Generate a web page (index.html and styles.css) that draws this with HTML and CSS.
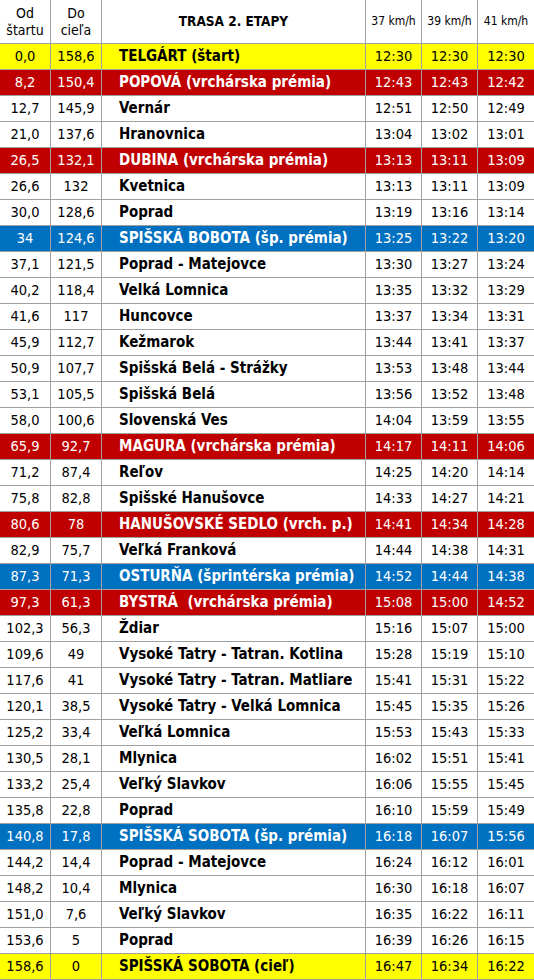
FILE: index.html
```html
<!DOCTYPE html>
<html lang="sk">
<head>
<meta charset="utf-8">
<title>Trasa 2. etapy</title>
<link rel="stylesheet" href="styles.css">
</head>
<body>
<table class="route">
  <thead>
    <tr class="head">
      <th class="c1">Od<br>štartu</th>
      <th class="c2">Do<br>cieľa</th>
      <th class="c3 title">TRASA 2. ETAPY</th>
      <th class="c4 speed">37 km/h</th>
      <th class="c5 speed">39 km/h</th>
      <th class="c6 speed">41 km/h</th>
    </tr>
  </thead>
  <tbody>
    <tr class="yellow"><td>0,0</td><td>158,6</td><td class="place">TELGÁRT (štart)</td><td>12:30</td><td>12:30</td><td>12:30</td></tr>
    <tr class="red"><td>8,2</td><td>150,4</td><td class="place">POPOVÁ (vrchárska prémia)</td><td>12:43</td><td>12:43</td><td>12:42</td></tr>
    <tr><td>12,7</td><td>145,9</td><td class="place">Vernár</td><td>12:51</td><td>12:50</td><td>12:49</td></tr>
    <tr><td>21,0</td><td>137,6</td><td class="place">Hranovnica</td><td>13:04</td><td>13:02</td><td>13:01</td></tr>
    <tr class="red"><td>26,5</td><td>132,1</td><td class="place">DUBINA (vrchárska prémia)</td><td>13:13</td><td>13:11</td><td>13:09</td></tr>
    <tr><td>26,6</td><td>132</td><td class="place">Kvetnica</td><td>13:13</td><td>13:11</td><td>13:09</td></tr>
    <tr><td>30,0</td><td>128,6</td><td class="place">Poprad</td><td>13:19</td><td>13:16</td><td>13:14</td></tr>
    <tr class="blue"><td>34</td><td>124,6</td><td class="place">SPIŠSKÁ BOBOTA (šp. prémia)</td><td>13:25</td><td>13:22</td><td>13:20</td></tr>
    <tr><td>37,1</td><td>121,5</td><td class="place">Poprad - Matejovce</td><td>13:30</td><td>13:27</td><td>13:24</td></tr>
    <tr><td>40,2</td><td>118,4</td><td class="place">Velká Lomnica</td><td>13:35</td><td>13:32</td><td>13:29</td></tr>
    <tr><td>41,6</td><td>117</td><td class="place">Huncovce</td><td>13:37</td><td>13:34</td><td>13:31</td></tr>
    <tr><td>45,9</td><td>112,7</td><td class="place">Kežmarok</td><td>13:44</td><td>13:41</td><td>13:37</td></tr>
    <tr><td>50,9</td><td>107,7</td><td class="place">Spišská Belá - Strážky</td><td>13:53</td><td>13:48</td><td>13:44</td></tr>
    <tr><td>53,1</td><td>105,5</td><td class="place">Spišská Belá</td><td>13:56</td><td>13:52</td><td>13:48</td></tr>
    <tr><td>58,0</td><td>100,6</td><td class="place">Slovenská Ves</td><td>14:04</td><td>13:59</td><td>13:55</td></tr>
    <tr class="red"><td>65,9</td><td>92,7</td><td class="place">MAGURA (vrchárska prémia)</td><td>14:17</td><td>14:11</td><td>14:06</td></tr>
    <tr><td>71,2</td><td>87,4</td><td class="place">Reľov</td><td>14:25</td><td>14:20</td><td>14:14</td></tr>
    <tr><td>75,8</td><td>82,8</td><td class="place">Spišské Hanušovce</td><td>14:33</td><td>14:27</td><td>14:21</td></tr>
    <tr class="red"><td>80,6</td><td>78</td><td class="place">HANUŠOVSKÉ SEDLO (vrch. p.)</td><td>14:41</td><td>14:34</td><td>14:28</td></tr>
    <tr><td>82,9</td><td>75,7</td><td class="place">Veľká Franková</td><td>14:44</td><td>14:38</td><td>14:31</td></tr>
    <tr class="blue"><td>87,3</td><td>71,3</td><td class="place">OSTURŇA (šprintérska prémia)</td><td>14:52</td><td>14:44</td><td>14:38</td></tr>
    <tr class="red"><td>97,3</td><td>61,3</td><td class="place">BYSTRÁ&nbsp; (vrchárska prémia)</td><td>15:08</td><td>15:00</td><td>14:52</td></tr>
    <tr><td>102,3</td><td>56,3</td><td class="place">Ždiar</td><td>15:16</td><td>15:07</td><td>15:00</td></tr>
    <tr><td>109,6</td><td>49</td><td class="place">Vysoké Tatry - Tatran. Kotlina</td><td>15:28</td><td>15:19</td><td>15:10</td></tr>
    <tr><td>117,6</td><td>41</td><td class="place">Vysoké Tatry - Tatran. Matliare</td><td>15:41</td><td>15:31</td><td>15:22</td></tr>
    <tr><td>120,1</td><td>38,5</td><td class="place">Vysoké Tatry - Velká Lomnica</td><td>15:45</td><td>15:35</td><td>15:26</td></tr>
    <tr><td>125,2</td><td>33,4</td><td class="place">Veľká Lomnica</td><td>15:53</td><td>15:43</td><td>15:33</td></tr>
    <tr><td>130,5</td><td>28,1</td><td class="place">Mlynica</td><td>16:02</td><td>15:51</td><td>15:41</td></tr>
    <tr><td>133,2</td><td>25,4</td><td class="place">Veľký Slavkov</td><td>16:06</td><td>15:55</td><td>15:45</td></tr>
    <tr><td>135,8</td><td>22,8</td><td class="place">Poprad</td><td>16:10</td><td>15:59</td><td>15:49</td></tr>
    <tr class="blue"><td>140,8</td><td>17,8</td><td class="place">SPIŠSKÁ SOBOTA (šp. prémia)</td><td>16:18</td><td>16:07</td><td>15:56</td></tr>
    <tr><td>144,2</td><td>14,4</td><td class="place">Poprad - Matejovce</td><td>16:24</td><td>16:12</td><td>16:01</td></tr>
    <tr><td>148,2</td><td>10,4</td><td class="place">Mlynica</td><td>16:30</td><td>16:18</td><td>16:07</td></tr>
    <tr><td>151,0</td><td>7,6</td><td class="place">Veľký Slavkov</td><td>16:35</td><td>16:22</td><td>16:11</td></tr>
    <tr><td>153,6</td><td>5</td><td class="place">Poprad</td><td>16:39</td><td>16:26</td><td>16:15</td></tr>
    <tr class="yellow"><td>158,6</td><td>0</td><td class="place">SPIŠSKÁ SOBOTA (cieľ)</td><td>16:47</td><td>16:34</td><td>16:22</td></tr>
  </tbody>
</table>
</body>
</html>
```
FILE: styles.css
```css
html, body {
  margin: 0;
  padding: 0;
  background: #ffffff;
}

.route {
  width: 534px;
  table-layout: fixed;
  border-collapse: separate;
  border-spacing: 0;
  font-family: "DejaVu Sans Condensed", "DejaVu Sans", sans-serif;
  font-size: 14.5px;
  color: #000000;
}

.route th,
.route td {
  box-sizing: border-box;
  padding: 0;
  border-right: 1px solid #a0a0a0;
  border-bottom: 1px solid #a0a0a0;
  text-align: center;
  vertical-align: middle;
  white-space: nowrap;
  overflow: hidden;
}

.route th:last-child,
.route td:last-child {
  border-right: none;
}

.head th {
  height: 44px;
  font-weight: normal;
  font-size: 14px;
  line-height: 17px;
}

.c1, .c2 { width: 51px; }
.c3 { width: 264px; }
.c4, .c5, .c6 { width: 56px; }

.route th.title {
  font-weight: bold;
  font-size: 13.5px;
}

.route th.speed {
  font-size: 12px;
}

.route tbody td {
  height: 26px;
  line-height: 25px;
}

.route td.place {
  text-align: left;
  padding-left: 17px;
  font-weight: bold;
  font-size: 15px;
}

.yellow td { background: #ffff00; }
.red td { background: #c00000; color: #ffffff; }
.blue td { background: #0070c0; color: #ffffff; }
```
